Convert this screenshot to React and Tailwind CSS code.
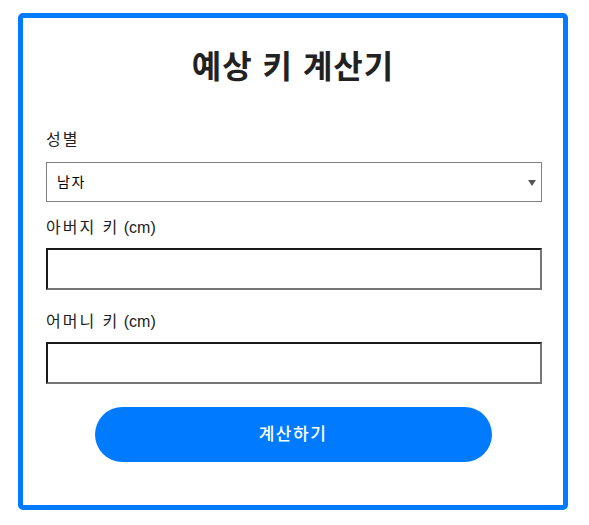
export default function App() {
  const font = { fontFamily: '"Liberation Sans", Arial, "Noto Sans CJK KR", sans-serif' };
  const input =
    "mt-[8px] w-[496px] h-[42px] border-2 border-t-[#1a1a1a] border-l-[#1a1a1a] border-b-[#767676] border-r-[#767676] bg-white";
  return (
    <div className="w-[589px] h-[525px] bg-white pt-[13px]" style={font}>
      <div className="mx-[18px] w-[550px] h-[497px] border-[5px] border-[#007bff] rounded-[5px] px-[23px] pt-[31px]">
        <h1 className="text-[32px] font-bold leading-[36px] text-[#222] text-center tracking-[1px]">예상 키 계산기</h1>
        <div className="mt-[43px] text-[16px] leading-[24px] text-[#222] tracking-[2px]">성별</div>
        <div className="relative mt-[10px] w-[496px] h-[40px] border border-[#808080] bg-white flex items-center px-[10px] text-[14px] text-black tracking-[1.5px]">
          남자
          <span className="absolute right-[5px] top-[17px] w-0 h-0 border-l-[4px] border-r-[4px] border-t-[6px] border-l-transparent border-r-transparent border-t-[#555]"></span>
        </div>
        <div className="mt-[14px] text-[16px] leading-[24px] text-[#222]">
          <span className="tracking-[2px]">아버지 키</span> (cm)
        </div>
        <div className={input}></div>
        <div className="mt-[20px] text-[16px] leading-[24px] text-[#222]">
          <span className="tracking-[2px]">어머니 키</span> (cm)
        </div>
        <div className={input}></div>
        <div className="mt-[23px] flex justify-center">
          <div className="w-[397px] h-[55px] rounded-full bg-[#007bff] text-white text-[17px] font-medium tracking-[1.5px] flex items-center justify-center">계산하기</div>
        </div>
      </div>
    </div>
  );
}
